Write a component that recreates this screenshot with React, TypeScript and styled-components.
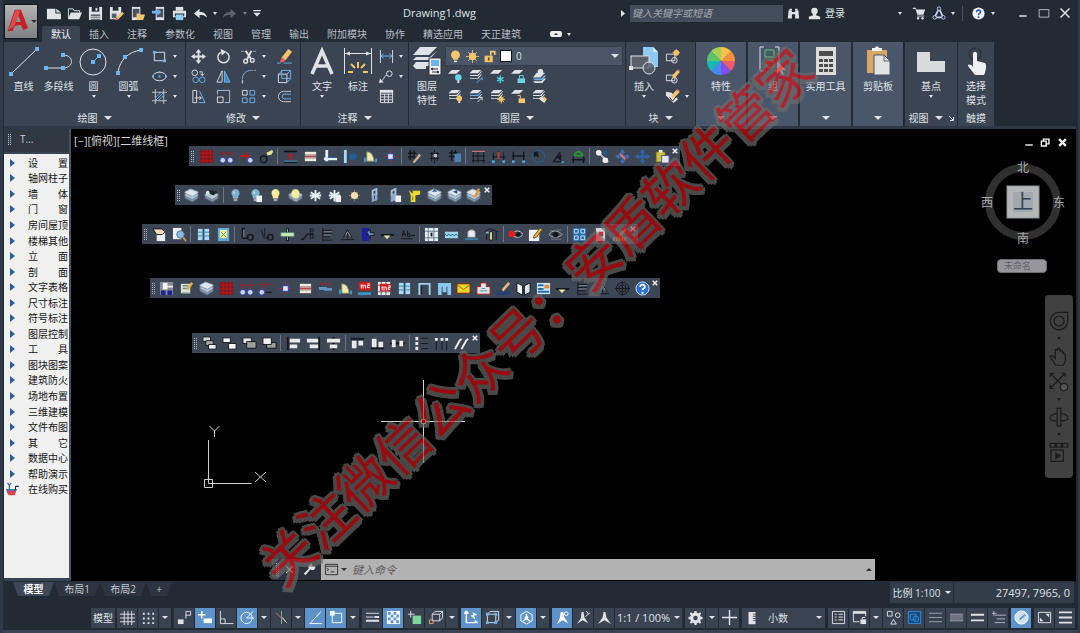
import React from "react";
import styled, { createGlobalStyle, css } from "styled-components";

/* ---------- palette ---------- */
const ink = "#dfe2e6";
const blue = "#6cb4ee";
const amber = "#f4c66c";
const dark = "#14181e";
const red = "#c2181c";

/* ---------- icon data ---------- */
type Shape = { d: string; stroke?: string; fill?: string; w?: number };
const S = (d: string, stroke = ink, w = 1): Shape => ({ d, stroke, w });
const F = (d: string, fill = ink, stroke?: string): Shape => ({ d, fill, stroke, w: 1 });
const C = (x: number, y: number, r: number) =>
  `M${x - r} ${y}a${r} ${r} 0 1 0 ${r * 2} 0a${r} ${r} 0 1 0 ${-r * 2} 0z`;
const R = (x: number, y: number, w: number, h: number) => `M${x} ${y}h${w}v${h}h${-w}z`;

const stack = (c1: string, c2: string): Shape[] => [
  F("M4 1h9l-3.500 3.500h-9z", c1),
  F("M1.500 6h1l-.5.5h7l4-4h1l-4 5h-9z", c2),
  F("M1.500 9h1l-.5.5h7l4-4h1l-4 5h-9z", c1),
];
const sheets: Shape[] = [
  F("M1 9l7-3 7 3v2l-6 4-8-4z", "#8397aa", "#59697a"),
  F("M1 6.500l6-3 8 3v2l-6 4-8-4z", "#b3c6d5", "#6b7f92"),
  F("M1 4l6-3 8 3v1.500l-6 3.500-8-3.500z", "#dce7ef", "#8298ab"),
];
const bulb = (c: string): Shape[] => [
  F("M8 1a4.500 4.500 0 0 1 3 7.700v2.300h-6v-2.300a4.500 4.500 0 0 1 3-7.700z", c),
  F(R(6, 11, 4, 3), "#a2a7ad"),
  S("M6.500 3.500v3", "#f4f8fa"),
];
const flake = (c: string): Shape[] => [S("M8 2v12M3 4.500l10 7M13 4.500l-10 7M2 8h12", c, 2)];
const page: Shape[] = [F("M9 8h6v7h-6z", "#eef0f2")];
const winBlue: Shape[] = [
  F(R(2, 2, 5, 12), "#a9dbf2"),
  F(R(9, 2, 5, 12), "#a9dbf2"),
  S("M2 5.500h5M2 9.500h5M9 5.500h5M9 9.500h5", "#3c86b8"),
];
const door: Shape[] = [
  F("M4 3c5 0 7 4 8 10H4z", "#f1e7b0", "#7f8a5c"),
  F("M1 9h2v5h-2zM13 10h2v4h-2z", "#3e9bd8"),
];
const rulerLeg: Shape[] = [S("M3 1v14M3 3.500h10M3 7h10M3 10.500h8M3 14h10", dark), S("M4 5h9M4 8.500h8", "#7b818a")];
const triMark: Shape[] = [S("M1 13.500h14M3 12l5-9 5 9M8 5v8", dark), S("M6 9l2-4 3 5", "#9da3aa")];
const elev: Shape[] = [S("M1 8.500h14", dark, 2), F("M4 9h7l-3.500 4z", "#f0e2b0")];
const redGrid: Shape[] = [F(R(1, 1, 14, 14), "#7a1a20"), S("M1 4.500h14M1 8.500h14M1 12.500h14M4.500 1v14M8.500 1v14M12.500 1v14", "#bd161c")];
const axes: Shape[] = [S("M3.500 3v6M12.500 3v6M1 4.500h14", "#a41a20"), F(C(4, 12, 3), "#c8d4f8", "#2f3cae"), F(C(12, 12, 3), "#c8d4f8", "#2f3cae")];
const axis1: Shape[] = [S("M1 7.500h10M8.500 4v6", red, 2), F(C(12, 12, 3), "#c8d4f8", "#2f3cae")];
const column: Shape[] = [S("M8 1v14M1 8h14", "#a0323c"), F(R(5, 5, 6, 6), "#dbe4fa", "#2f3cae")];
const wallBar: Shape[] = [F(R(2, 3, 12, 3), "#f0ead8"), F(R(2, 6, 12, 4), "#c39a98"), F(R(2, 10, 12, 3), "#f0ead8"), S("M2 8h12", "#b04040")];

const icons: Record<string, Shape[]> = {
  /* quick access */
  new: [F("M1 3h9v5h6v6h-15z"), F("M11 3l5 4h-5z")],
  open: [S("M1.500 13v-10h5l1 2h6v2", ink, 1), F("M4 7h12l-3 7h-12z")],
  save: [F("M1 1h14v14h-14z"), F(R(4, 1, 8, 5), "#222a34"), F(R(8, 2, 2, 3)), F(R(3, 9, 10, 6), "#59616c"), S("M3 11.500h10M3 13.500h10")],
  saveAs: [F("M1 1h12v6l-5 7h-7z"), F(R(4, 1, 6, 4), "#222a34"), F(R(3, 8, 5, 5), "#59616c"), F("M8 12l6-6 2 2-6 6-3 1z", amber), F("M7 15l1-3 2 2z", "#e2574c")],
  openWeb: [F("M2 1h9v14h-9z"), F(R(3, 3, 7, 9), "#4a525e"), F("M7 8h3l1 1h5l-2 6h-7z", amber)],
  saveWeb: [F("M5 1h9v14h-9z"), F(R(6, 3, 7, 9), "#4a525e"), F("M1 5h6v-2l4 3.500-4 3.500v-2h-6z", blue)],
  print: [F(R(4, 1, 8, 4)), F("M1 5h14v7h-14z"), F(R(3, 8, 10, 3), "#222a34"), F(R(4, 9, 8, 6), "#8fd0f2")],
  undo: [F("M1 8l6-5v3.500c5 0 7 2 8 6-2-2.500-4-3-8-3v3.500z")],
  redo: [F("M15 8l-6-5v3.500c-5 0-7 2-8 6 2-2.500 4-3 8-3v3.500z", "#59616c")],
  custom: [F("M3 4h10v1.500h-10zM3 7.500h10l-5 5z")],
  binoc: [F("M2 4h4v2h4v-2h4l1 10h-5v-5h-4v5h-5z"), F("M3 2h3v2h-3zM10 2h3v2h-3z")],
  user: [F(C(8, 5, 4)), F("M6 8h4v2l5 2v3h-14v-3l5-2z")],
  cart: [F("M1 2h3l1 2h10l-2 6h-7l-2-6.500h-3z"), S("M6 11.500h8", ink), F(C(7, 14, 1.4)), F(C(12, 14, 1.4))],
  share: [S("M8 3l-5 10h10z", "#c9d0f0", 2), F(C(8, 3, 2), "#222a34", "#c9d0ff"), F(C(3, 13, 2), "#222a34", "#c9d0ff"), F(C(13, 13, 2), "#222a34", "#c9d0ff")],
  help: [F(C(8, 8, 7.5), "#f2f4f8"), S("M5.500 6.500c0-4 5.500-3 5 0-.3 1.500-2.500 1.500-2.500 3.500M8 11.500v2", "#2f54c0", 2)],
  min: [S("M3 12h10", ink, 2)],
  max: [S("M1.500 3.500h13v10h-13z", ink, 1)],
  close: [S("M2 2l12 12M14 2l-12 12", ink, 2)],
  closeBold: [S("M2 2l12 12M14 2l-12 12", "#f0f1f3", 4)],

  /* small ribbon icons */
  rect: [S("M2.500 3.500h11v9h-11z"), F("M1 2h3v3h-3zM12 11h3v3h-3z", blue)],
  ellipse: [S("M1 8a7 4.500 0 1 0 14 0a7 4.500 0 1 0-14 0z"), F("M7 7h2v2h-2zM0 7h2v2h-2zM14 7h2v2h-2zM7 2.500h2v2h-2z", blue)],
  hatch: [S("M3.500 0v16M12.500 0v16M0 3.500h16M0 12.500h16", "#c5c9cf"), S("M4 9l5-5M4 12l8-8M7 12l5-5", blue, 1)],
  move: [F("M8 0l3 4h-2v3h3v-2l4 3-4 3v-2h-3v3h2l-3 4-3-4h2v-3h-3v2l-4-3 4-3v2h3v-3h-2z")],
  rotate: [S("M11 3.500a6 6 0 1 1-6 0", ink, 1.5), F("M5 0l6 3-5 4z")],
  trim: [S("M0 2.500h3M4 2.500h2M10 2.500h2M13 2.500h3", "#a3a8af"), S("M5 2l6 9M11 2l-5 10", ink, 2), S(C(5, 13, 2), ink, 1.5), S(C(12, 12, 2), ink, 1.5)],
  erase: [F("M12 0l4 3-7 9-4-3z", amber), F("M5 8.500l4 3.500-2 2h-4z", "#e0655a"), S("M0 15h4M7 15h9", blue)],
  copy: [S(C(4, 4, 3)), S(C(5, 11.5, 3), blue), S(C(12, 11.5, 3), blue), S("M9 3h3v4M10 5l2 2 2-2")],
  mirror: [S("M6.500 2v12h-5.500z"), F("M9 2l6 12h-6z", "#4687bd", blue)],
  fillet: [S("M1.500 15.500v-4"), S("M1.500 11c0-6 4-9.500 9-9.500", blue), S("M11 1.500h2M14 1.500h2", "#a3a8af")],
  box3: [S("M1.500 5.500h9v9h-9z"), S("M1.500 5.500l4-4h9v9l-4 4M10.500 5.500l4-4", blue), S("M5 1v9h9", blue)],
  stretch: [S("M2 1.500h4v13h-4z"), S("M9 2l6 12.500h-7", blue), S("M4 9.500h7M9 7.500l2 2-2 2")],
  scale: [S("M1.500 8.500h6v6h-6z"), S("M1.500 6v-4.500h13v13h-5", "#9fc8ea")],
  array: [S("M1.500 1.500h5v5h-5z"), S("M9.500 1.500h5v5h-5zM1.500 9.500h5v5h-5zM9.500 9.500h5v5h-5z", blue)],
  offset: [S("M15 2.500h-8a5.500 5.500 0 0 0 0 11h8", "#c5c9cf", 1), S("M15 5.500h-7a2.500 2.500 0 0 0 0 5h7", blue)],
  dimlin: [S("M1.500 1v14M14.500 1v14"), S("M2 7.500h12M5 5l-3 2.500 3 2.500M11 5l3 2.500-3 2.500", blue)],
  leader: [S(C(11, 5, 3)), S("M8.500 6.500c-3 0-2 4-7 7"), F("M0 15l1-5 4 4z")],
  table: [S("M1.500 1.500h13v13h-13zM1.500 5.500h13M1.500 8.500h13M1.500 11.500h13M6 5v10M10 5v10"), F(R(1, 1, 14, 3))],
  l1: [F("M4 1h9l-4 4h-9z"), F(C(11, 9, 3.5), "#6cd5e0"), F(R(10, 12, 2, 3))],
  l2: [...stack(ink, ink), S("M8 15l6-6M14 9v3", blue, 1)],
  l3: [F("M4 1h9l-4 4h-9z"), S("M11 7v8M7.500 9l7 4M14.500 9l-7 4", "#4fd0dc", 1.5)],
  l4: [F("M4 1h9l-4 4h-9z"), F(R(7, 10, 8, 5), "#6cd5e0"), S("M9 10v-3h4v3", "#6cd5e0")],
  l5: [F("M3 15h8l4-5h-2l-3 3h-9z"), F("M3 12h8l4-5h-2l-3 3h-9z", blue), F("M1 9h8l5-5h-9z"), F(C(9, 3, 3))],
  l6: [...stack(ink, ink), F(C(12, 10, 3), amber), F(R(11, 13, 2, 2))],
  l7: [...stack(ink, blue), S("M9 14l5-5M11 9h3v3")],
  l8: [...stack(ink, ink), F(C(12, 11, 2.5), amber), S("M12 6.500v9M7.500 11h9M9 8l6 6M15 8l-6 6", amber)],
  l9: [F("M4 1h9l-4 4h-9z"), F(R(8, 10, 7, 5), amber), S("M10 10v-3h-3", amber)],
  l10: [...stack(ink, ink), F("M7 10l3-2 5 4-2 3z", "#ece8dc"), F("M11 9l2-1 3 3-2 2z", amber)],
  b1: [S("M1.500 5.500h9v7h-9z"), S(C(10, 12, 3)), F(C(12, 4, 3), amber), S("M12 0v8M8 4h8", amber)],
  b2: [S("M1.500 6.500h9v6h-9z"), S(C(10, 12, 3)), F("M8 7l5-6 3 2-5 6-3 1z", amber), F("M13 1l1-1 2 2-1 1z", "#e0655a")],
  b3: [F("M1 3l6 1 7 7-5 4-8-8z"), F("M7 7l5-6 4 2-6 6-3 1z", amber), F("M12 1l1-1 3 2-1 1z", "#e0655a"), S("M5 9l3 4 4-5", dark)],
  lockY: [F(R(2, 7, 10, 8), amber), S("M9.500 7v-5h5v4", amber, 2), F(R(6, 9, 2, 4), "#5a4a28")],
  bulbY: [F(C(8, 6, 5.5), amber), F(R(5, 10, 6, 2), amber), F(R(6, 13, 4, 2))],
  sunY: [F(C(8, 8, 4.5), amber), S("M8 0v16M0 8h16M2.500 2.500l11 11M13.500 2.500l-11 11", amber, 1)],

  /* floating toolbars */
  redGrid, axes, axis1, column, wallBar, door, winBlue, rulerLeg, triMark, elev, sheets,
  axisKey: [S(C(5, 11, 3.5), dark, 1.5), S("M8 9l6-7", dark), F("M8 4l6-3 1 2-2 3-4 1z", "#e9e39a")],
  ibeam: [S("M1 2.500h14M1 14h14", "#101318", 2), S("M1 13h14", "#4aa0d8"), F("M8 4l3 4h-2v4h-2v-4h-2z", red)],
  corner: [S("M4 1v12M1 10.500h14", "#dff0fa", 3), S("M5 9h10", "#27619a")],
  arrowIn: [F(R(1, 1, 3, 14), "#a8daf4"), F("M7 5h4v-2l4 5-4 5v-2h-4z", "#1e5f9c")],
  hatchPen: [S("M1 4.500h9M1 8.500h7M3.500 1v11M7.500 1v9", dark, 1.5), F("M6 14l7-9 2 2-7 8z", "#d9b094")],
  cross1: [S("M3 5h10M3 10h10M8 1v14M5 3v10M11 3v10", dark), F(C(9, 7, 2), "#b8bec6")],
  cross2: [S("M2 4h9M2 8h9M5 1v12M9 1v8", dark, 1.5), F(R(8, 5, 7, 9), "#4f7db4")],
  grid3: [S("M2.500 3v12M7.500 3v12M13.500 3v12M1 7.500h14M1 12.500h14", dark), S("M1 2.500h14", "#e88080")],
  dim2: [S("M2.500 4v9M13.500 4v9M1 8.500h14M8 2v10", dark), F(R(1, 12, 3, 3), "#4aa0d8"), F(R(12, 12, 3, 3), "#4aa0d8"), F("M7 3h2v8h-2z", "#c04028")],
  dim3: [S("M2.500 3v10M13.500 3v10M1 7.500h14", dark, 1.5), F(R(1, 12, 3, 3), "#4aa0d8"), F(R(12, 12, 3, 3), "#4aa0d8")],
  radius: [S(C(8, 8, 6.5), "#1f5fa0"), S("M8 8l-4-4M4 8v-4h4", dark, 2)],
  angle: [S("M2 13.500h12M3 13l7-10", dark, 1.5), F("M6 9l5-4v8z", dark), F(R(11, 13, 3, 2), "#4aa0d8")],
  dimGreen: [S("M2.500 8v7M13.500 8v7M1 11.500h14", dark, 1.5), S("M4 7a4 4 0 1 1 8 0z", "#259a2c", 2)],
  diag: [S("M2 2l12 12", "#b9c0c8", 2), F(C(4, 4, 3), "#f2f2f2"), F(C(11, 12, 3), "#f2f2f2"), F(R(9, 2, 4, 4), "#245a94")],
  moveRed: [F("M8 0l3 4h-2v3h3v-2l4 3-4 3v-2h-3v3h2l-3 4-3-4h2v-3h-3v2l-4-3 4-3v2h3v-3h-2z", "#3f6fb2"), S("M5 5l6 6", "#e07070", 2)],
  moveBlue: [F("M8 0l3 4h-2v3h3v-2l4 3-4 3v-2h-3v3h2l-3 4-3-4h2v-3h-3v2l-4-3 4-3v2h3v-3h-2z", "#2f66b0")],
  paste: [F(R(1, 3, 10, 11), "#c9c23a", "#55501a"), F(R(4, 1, 4, 3), "#e8e8d0"), F(R(7, 7, 8, 8), "#e4e4f4", "#5a4a9a")],
  sheetDark: [...sheets.slice(0, 2), F("M2 4l4-2 9 2-5 4z", "#20262e"), F(C(4, 5, 2), "#dfe6ec")],
  bulbB: bulb("#7fb2cf"),
  bulbBP: [...bulb("#7fb2cf"), ...page],
  bulbW: bulb("#f5ec96"),
  bulbS: [...sheets.slice(0, 2), ...bulb("#f5ec96")],
  flake: flake("#e4eef4"),
  flakeP: [...flake("#e4eef4"), ...page],
  sun: [S("M8 2v12M2 8h12M4 4l8 8M12 4l-8 8", "#a87a58"), F(C(8, 8, 3.8), "#fbdfae")],
  lockB: [F("M5 7l6-2v8l-6 2z", "#8fa9c8"), S("M6 8v-5l4-2v6", "#a9bdd6", 2), S("M8 8v4", "#30405a")],
  lockBP: [F("M4 7l6-2v8l-6 2z", "#8fa9c8"), S("M5 8v-5l4-2v6", "#a9bdd6", 2), ...page],
  lockYe: [F("M2 2l4 4v-3h8v4l-5 1v7h-5v-7z", "#e4dc30"), S("M6 9v4", "#7c7718")],
  sheetCur: [...sheets, F("M8 1l3 3h-6z", "#40618c")],
  sheetBlue: [...sheets, F("M6 4l5-2v4z", "#2b5080")],
  sheetPen: [...sheets, F("M8 9l5-9 2 1-4 9z", "#e59a38")],
  handDoc: [F(R(5, 4, 9, 11), "#eceff2"), F("M1 2h9l4 3-3 3h-6z", "#f3dcc0", dark)],
  preview: [F(R(1, 1, 9, 12), "#edf1f4"), F(C(9, 8, 4), "#8ab8de", "#54789c"), S("M12 11l3 4", "#c98a58", 2)],
  winGreen: [F(R(2, 1, 12, 14), "#5fa8d0"), F(R(4, 3, 8, 9), "#e6efb0"), S("M5 5l6 6M11 5l-6 6", "#8a9a3c")],
  lev1: [S("M2.500 1v11h6M2 3l3-2", dark, 1.5), S(C(11, 11, 3), dark, 1.5), S("M4 3v8", "#7d858e")],
  lev2: [S("M1 2.500l3 9h6M5 1v9", dark), S(C(11, 11, 3), dark, 1.5)],
  beam: [S("M8 1v14", dark, 3), S("M8 2v12", "#76c8a0"), F(R(1, 6, 14, 4), "#d3e8bc", "#4f8f78")],
  path8: [S("M1 13.500c6 0 4-6 8-6h5", dark, 1.5), S("M11 2h3v3h-3zM11 8h3v4h-3z", dark)],
  insBlue: [F(R(2, 1, 8, 14), "#1f1f9a"), F("M7 5l4-2v3h4v3h-4v3z", "#6a8fc4", dark)],
  ab: [S("M1 12.500h12M2 10l2-6 2 6M3 8h3M8 4v6h2.500v-3h-2M12 9h4", dark)],
  gridLt: [F(R(1, 1, 14, 14), "#e9edf0"), S("M4.500 1v14M10.500 1v14M1 4.500h14M1 11.500h14", "#56789a"), F(R(7, 6, 2, 4), dark)],
  wave: [F(R(1, 5, 14, 7), "#9bd4e6"), S("M1 7.500l2 2 2-2 2 2 2-2 2 2 2-2 2 2", "#1d5674")],
  dome: [F("M4 11v-5c0-4 8-4 8 0v5z", "#e8eaec", "#7a828c"), S("M1 13h14", "#3a7aa4", 2)],
  house: [S("M1 5l5-3 9 3M3 5v9M13 5v9", dark), F(R(6, 5, 3, 9), "#e6e490", dark), F(R(2, 5, 3, 2), "#79b4c8")],
  eyeRed: [S("M4 8c3-5 9-5 12 0-3 4-9 4-12 0z", "#c0c6cc"), F(C(11, 8, 2.5), dark), F(C(4, 7.5, 3.5), "#ee1a1a")],
  editDoc: [F(R(1, 3, 11, 12), "#f0f2f4"), F("M6 10l7-9 2 2-6 8-3 1z", "#e7b43c", "#6a4c18")],
  eye: [S("M1 8c3-5 10-5 14 0-4 4-10 4-14 0z", "#a9b0b8"), F(C(8, 8, 3), dark), S("M2 4l12-1M3 13l11 0", "#6d7580")],
  gridBlue: [F(R(1, 1, 14, 14), "#2b6ba6"), S("M2.500 2.500h4v4h-4zM9.500 2.500h4v4h-4zM2.500 9.500h4v4h-4zM9.500 9.500h4v4h-4z", "#c3e4f5")],
  film: [F(R(2, 1, 12, 14), "#d9d4d8"), F(R(6, 5, 5, 5), "#c03040"), S("M2.500 1v14M13.500 1v14", "#333")],
  waveY: [S("M1 11v4M4 10v5M7 11v4M10 10v5M13 11v4", "#e0a53c", 2), F("M6 8l7-7 1 3-6 6z", "#e08a48")],
  colGrey: [F(R(1, 1, 14, 14), "#858c95"), F(R(4, 2, 5, 7), "#f3f3f3"), F("M2 10h5v5h-5zM9 10h5v5h-5z", "#1f228c"), S("M8 6h7", "#e8e8e8", 2)],
  sketch: [F(R(2, 3, 10, 10), "#dfe3da"), S("M4 5h6M4 8h6M3 13h9", "#6f8a80", 1.5), F("M8 8l5-7 2 2-5 7z", "#e2b24c")],
  axisL: [S("M1 3.500h14M4.500 1v8", "#a41a20"), F(C(4, 12, 3), "#c8d4f8", "#2f3cae"), S("M8 12h7", dark)],
  pipe: [S("M1 8h7v1h7", "#5d93bd", 3), F("M4 5l-2-3h4zM11 5l-2-3h4z", red)],
  m2: [F(R(2, 1, 13, 9), "#d41c20"), S("M4.500 8v-4M4 4.500h5M6.500 5v3M9 5v3M11 3h2v2h-2v2h2.500", "#fff"), F(R(1, 12, 14, 3), "#3f93c6")],
  m2p: [F(R(1, 1, 13, 14), "#eef1f3"), S("M1 4.500h13M1 11.500h13M4.500 1v14M9.500 1v14", "#555d68"), F(R(3, 3, 12, 8), "#d41c20"), S("M5.500 10v-4M5 6.500h5M7.500 7v3M10 7v3M12 5h2v2h-2v2h2", "#fff")],
  gate: [S("M2.500 15v-12h11v12", "#9fd0ea", 2), S("M5 5v9", dark)],
  gateF: [F("M1 2h14v13h-4v-9h-1v6h-4v-6h-1v9h-4z", "#8cc8ee")],
  envY: [F(R(1, 3, 14, 10), "#ecd62c", "#8f1f18"), S("M1 4l7 5 7-5", "#8b6a10")],
  stampR: [F("M5 2h6v4h4v8h-14v-8h4z", "#d7e8ea", red), S("M4 10.500h8M6 8h4", "#5a8a94")],
  penBlue: [S("M1 11h5M9 12h6M1 14h12", "#1c3f7c", 2), F("M6 9l7-8 2 2-7 8z", "#e2b88a")],
  book: [F("M1 2l6 3v10l-6-3z", "#f5f5f5", dark), F("M15 2l-6 3v10l6-3z", "#dfe4e8", dark)],
  layout: [F(R(1, 2, 14, 12), "#cfe6f5"), F(R(9, 4, 5, 4), "#e28a3c"), S("M2 4.500h6M2 8.500h6M2 11.500h12", "#2b6ba6", 2)],
  target: [S(C(8, 8, 6.5), dark), S("M8 0v16M0 8h16", dark, 1), S(C(8, 8, 4), dark)],
  helpB: [F(C(8, 8, 7), "#2a6fd6", "#cfe2fa"), S("M5.500 6.500c0-4 5.500-3 5 0-.3 1.500-2.500 1.500-2.500 3M8 11.500v2", "#fff", 2)],
  ord1: [F(R(1, 1, 8, 5), "#d8dadc", dark), F(R(4, 5, 8, 5), "#aab0a8", dark), F(R(7, 9, 8, 5), "#eef0f2", dark)],
  ord2: [F(R(1, 2, 8, 5), "#f4f5f6", dark), F(R(7, 8, 8, 6), "#f4f5f6", dark)],
  ord3: [F(R(1, 2, 9, 6), "#e4e6e8", dark), F(R(5, 6, 10, 7), "#9ba29c", dark)],
  ord4: [F(R(5, 7, 10, 6), "#9ba29c", dark), F(R(1, 2, 9, 7), "#f0f2f4", dark)],
  alL: [S("M2 1v14", dark, 2), F("M4 3h11v4h-11zM4 9h8v4h-8z", "#e8eaec")],
  alR: [S("M14 1v14", dark, 2), F("M1 3h12v4h-12zM4 9h9v4h-9z", "#e8eaec")],
  alC: [S("M8 1v14", dark, 2), F("M1 3h14v4h-14zM4 9h8v4h-8z", "#e8eaec")],
  alT: [S("M1 3h14", dark, 2), F("M2 5h5v8h-5zM9 5h5v5h-5z", "#e8eaec")],
  alB: [S("M1 13h14", dark, 2), F("M2 3h5v9h-5zM9 6h5v6h-5z", "#e8eaec")],
  alM: [S("M0 8h16", dark, 2), F("M2 4h4v8h-4zM10 5h4v6h-4z", "#e8eaec")],
  listW: [S("M3 1v14", "#e8eaec", 3), S("M1 5.500h4M1 10.500h4", "#3d4655", 2), S("M7 2.500h8M7 8h8M7 13.500h8", dark, 1)],
  cols: [F("M1 2h3v3h-3zM7 2h3v3h-3zM12 2h3v3h-3z", "#e8eaec"), S("M2.500 6v9M8.500 6v9M13.500 6v9", dark)],
  slashes: [S("M1 14l5-9 2-2M8 14l5-9 2-2", "#f0f1f3", 2)],

  /* status bar */
  gridS: [S("M0 4.500h16M0 8.500h16M0 12.500h16M4.500 1v15M8.500 1v15M12.500 1v15", ink, 1)],
  dots: [F([3, 8, 13].map((y) => [2, 7, 12].map((x) => R(x, y, 2, 2)).join("")).join(""))],
  infer: [F(R(1, 10, 6, 5)), S("M9.500 9v-7.500h5v4h-5")],
  dyn: [S("M4 1v8M0 5h8", "#fff", 1.5), F(R(6, 9, 9, 5), "#fff")],
  ortho: [S("M1.500 1v13.500h14M1.500 9.500h5v5")],
  polar: [S(C(7, 8.5, 6), "#fff"), S("M7 8.500l7-7M7 8.500h8", "#fff")],
  iso: [S("M2 3l12 11", "#d46a78"), S("M8 1v14", "#79b885"), S("M9 8l4 5", ink)],
  track: [S("M15 14.500h-13l12-13", "#fff")],
  osnap: [S("M3.500 3.500h10v10h-10z", "#fff"), F("M1 1h5v5h-5z", "#fff")],
  lw: [S("M1 3.500h14M1 7.500h8", ink, 1), S("M10 7.500h5M1 11.500h14", ink, 2)],
  transp: [F(R(1, 1, 14, 14), "#fff"), F([2, 8].map((y) => [2, 8].map((x) => R(x, y, 3, 3) + R(x + 3, y + 3, 3, 3)).join("")).join(""), "#5d93c8")],
  cycle: [F(R(6, 6, 9, 9), "#7fd69a"), S("M4 1v7M1 4.500h7")],
  cube: [S("M4.500 4.500h8v7h-8zM4.500 4.500l3-3h8v7l-3 3M12.500 4.500l3-3"), S("M1.500 10.500h4v4h-4z", "#e6a070")],
  ucsA: [S("M2.500 1v12.500h12M2.500 1l-2 3M2.500 1l2 3M14.500 13.500l-3-2", "#fff", 1.5), F("M9 2l5 3-3 1 1 4-5-4 3-1z", "#fff")],
  filter: [S("M2.500 4.500h9v9h-9zM2.500 4.500l3-3h9v9l-3 3"), F("M1 3h3v3h-3zM10 3h3v3h-3zM1 12h3v3h-3zM10 12h3v3h-3z", blue)],
  gizmo: [S("M8 1.500l6 3.500v6.500l-6 3.500-6-3.500v-6.500z", "#fff"), S("M8 4v5l-4 3M8 9l4 3", "#fff", 1.5), F(C(8, 8, 2), "#fff")],
  ann1: [F("M6 2h3l1 6 4 6-6-3-6 4 3-6z", "#fff"), S(C(12, 4, 2), "#fff")],
  ann2: [F("M6 2h2l1 6 4 6-6-3-6 4 4-6z"), S("M11 1l2 3M15 3l-5 4")],
  ann3: [F("M7 2h2l1 6 5 7-7-4-7 4 5-7z")],
  gear: [F("M7 1h2l.5 2 1.500.6 1.800-1.200 1.300 1.300-1.200 1.800.6 1.500 2 .5v2l-2 .5-.6 1.500 1.200 1.800-1.300 1.300-1.800-1.200-1.500.6-.5 2h-2l-.5-2-1.500-.6-1.800 1.200-1.300-1.300 1.200-1.800-.6-1.500-2-.5v-2l2-.5.6-1.500-1.200-1.800 1.300-1.300 1.800 1.200 1.500-.6z"), F(C(8, 8.5, 2.4), "#3a4352")],
  plus: [S("M8 0v16M0 8h16", ink, 1.5)],
  ruler: [F("M4 1h8v2h-3v1h3v1.500h-3v1h3v1.500h-3v1h3v1.500h-3v1h3v3.500h-8z")],
  qp: [S("M1.500 1.500h13v13h-13z"), S("M4 4.500h2M8 4.500h5M4 7.500h2M8 7.500h5M4 10.500h2M8 10.500h5")],
  lockUi: [S("M8 12.500h-6.500v-11h13v5"), S("M1 3h14", ink, 2), F(R(9, 10, 6, 5)), S("M11 10v-2h3")],
  shapes: [S("M1.500 1.500h5v5h-5zM5 15l3-5 3 5z"), S(C(12.5, 5.5, 2.5))],
  isoBlue: [F(R(1, 1, 14, 14), "#1c4a78"), S("M1.500 1.500h13v13h-13zM3.500 4.500h6v6h-6z", "#2f8be0"), S(C(9.5, 9.5, 3), "#2f8be0")],
  ham1: [S("M1 3.500h14M1 8h14M1 12.500h14", "#9aa0a9")],
  ham2: [F(R(1, 4, 14, 8), "#6d7480"), S("M1 4.500h14M1 11.500h14", "#8d939d")],
  ham3: [S("M1 5h14M1 11h14", ink, 2)],
  ham4: [S("M4 5.500h12M6 9.500h9M4 13.500h11M3 1v5M1 3.500h5", "#b4b9c1")],
  perf: [F(C(8, 8, 7), "#cfe0f0"), S("M6 10l6-5", "#5d93c8", 2), S(C(8, 8, 7), "#fff")],
  full: [S("M1.500 2.500h13v11h-13z"), F("M9 4h4v4zM3 8v4h4z")],
  menu: [S("M1 2.500h14M1 8h14M1 13.500h14", ink, 2)],
  restore: [S("M2 6h7v7h-7zM5 5v-2h8v7h-3", "#fff", 2)],
  wrench: [F("M10 1c3-1 0 2 2 3s4-1 3 2c-1 3-4 3-6 2l-6 7-2-2 6-6c-1-3 0-5 3-6z")],
  prompt: [S("M1.500 2.500h13v11h-13zM1.500 4.500h13M3 6.500l2 1.500-2 1.500M7 10.500h4", "#343434")],
  buy: [S("M3 1l2 3 2-3M5 4v4M12 5h3", "#3a6ea8", 1.5), F("M1 8h13l-3 5h-8z", "#4378b4"), F("M2 10h11l-2 5h-7z", "#d8444c"), S("M12 9v-4h4", dark)],

  /* viewport navigation */
  wheel: [S("M8 1h7v7a7 7 0 1 1-7-7z", "#1c1c1c"), S(C(8, 8, 4), "#1c1c1c")],
  hand: [S("M5 15c-1-3-4-5-4-7 2-1 3 1 4 2v-7c1-1 2 0 2 1v-2c1-1 2 0 2 1v1c1-1 2 0 2 1v1c1-1 2 0 2 1v5c0 2-2 3-2 4z", "#1c1c1c")],
  zoomX: [S("M1 1l12 12M13 1l-12 12M1 4v-3h3M10 1h3v3M1 10v3h3", "#1c1c1c"), F(C(12, 12, 3), "#555", "#1c1c1c")],
  orbit: [S("M6.500 1h3v14h-3zM6 5c-7 2-7 6 0 6M10 5c7 2 7 6 0 6", "#1c1c1c")],
  movie: [S("M1 1h4v3h-4zM6 1h4v3h-4zM11 1h4v3h-4zM1.500 6.500h10v9h-10z", "#1c1c1c"), F("M5 8l5 3-5 3z", "#1c1c1c")],
};

const Icon = ({ name, size = 16 }: { name: string; size?: number }) => (
  <svg width={size} height={size} viewBox="0 0 16 16" aria-hidden="true">
    {(icons[name] || []).map((p, i) => (
      <path key={i} d={p.d} fill={p.fill || "none"} stroke={p.stroke || "none"} strokeWidth={p.w} />
    ))}
  </svg>
);

/* ---------- base ---------- */
const GlobalStyle = createGlobalStyle`
  * { box-sizing: border-box; }
  body { margin: 0; background: #222a34; }
  body, button, input, select {
    font-family: "Open Sans", "Noto Sans CJK SC", sans-serif;
    font-size: 10px;
    line-height: 14px;
    color: #dfe2e6;
  }
  button, input { border: 0; padding: 0; margin: 0; background: none; }
  svg { display: block; flex: none; }
`;

const Shell = styled.div`
  position: relative;
  display: flex;
  flex-direction: column;
  min-height: 100vh;
  padding: 0 4px 4px;
  overflow: hidden;
  background: #222a34;
  box-shadow: inset 3px 0 #303947, inset -2px 0 #303947, inset 0 -3px #3a4353;
`;

const Caret = styled.i<{ $size?: number; $up?: boolean; $color?: string }>`
  flex: none;
  width: 0;
  height: 0;
  border: solid transparent;
  border-width: 0 ${(p) => p.$size || 2}px;
  ${(p) => (p.$up ? "border-bottom" : "border-top")}: ${(p) => p.$size || 3}px solid ${(p) => p.$color || "#dfe2e6"};
`;

/* ---------- header ---------- */
const Header = styled.header`
  display: flex;
  height: 42px;
`;
const AppButton = styled.button`
  display: flex;
  align-items: center;
  width: 34px;
  height: 35px;
  margin-top: 4px;
  border: 1px solid #14181e;
  background: linear-gradient(#b4b4b4, #7d7f82);
`;
const HeaderMain = styled.div`
  flex: 1;
  min-width: 0;
`;
const TitleBar = styled.div`
  display: flex;
  align-items: center;
  justify-content: space-between;
  height: 26px;
`;
const ToolStrip = styled.div`
  display: flex;
  align-items: center;
  padding-left: 5px;
`;
const IconButton = styled.button<{ $w?: number }>`
  display: flex;
  align-items: center;
  justify-content: center;
  width: ${(p) => p.$w || 21}px;
  height: 20px;
`;
const DocTitle = styled.h1`
  flex: none;
  margin: 0;
  font-size: 11px;
  font-weight: 400;
  line-height: 20px;
`;
const TitleTools = styled.div`
  display: flex;
  align-items: center;
`;
const TitleHalf = styled.div<{ $end?: boolean }>`
  display: flex;
  flex: ${(p) => (p.$end ? "0 0 600px" : "1")};
  justify-content: ${(p) => (p.$end ? "flex-end" : "flex-start")};
`;
const SearchBox = styled.input`
  width: 153px;
  height: 17px;
  margin-left: 5px;
  padding-left: 2px;
  background: #434c5b;
  font-style: italic;
  &::placeholder { color: #a2a8b1; opacity: 1; }
`;
const SignIn = styled.button`
  display: flex;
  align-items: center;
  width: 88px;
`;
const WindowButtons = styled.div`
  display: flex;
  margin-left: 14px;
`;
const Divider = styled.span`
  width: 1px;
  height: 15px;
  margin: 0 5px;
  background: #4b535f;
`;
const Tabs = styled.nav`
  display: flex;
  padding-left: 4px;
`;
const Tab = styled.button<{ $active?: boolean }>`
  height: 16px;
  padding: 0 9px;
  border-radius: 2px 2px 0 0;
  background: ${(p) => (p.$active ? "#3b4453" : "none")};
  color: ${(p) => (p.$active ? "#f4f5f6" : "#b9bec6")};
`;
const TabExtra = styled.button`
  display: flex;
  align-items: center;
  gap: 5px;
  padding-left: 20px;
`;
const Pill = styled.span`
  display: flex;
  align-items: center;
  justify-content: center;
  width: 12px;
  height: 6px;
  border-radius: 2px;
  background: #eceef0;
`;

/* ---------- ribbon ---------- */
const Ribbon = styled.div`
  display: flex;
  height: 87px;
  border-bottom: 3px solid #2f3846;
`;
const Panel = styled.section<{ $w: number; $tall?: boolean }>`
  display: flex;
  flex-direction: column;
  width: ${(p) => p.$w}px;
  height: 84px;
  margin-right: ${(p) => (p.$tall ? 2 : 1)}px;
  background: ${(p) => (p.$tall ? "#4a566a" : "#3b4453")};
  flex: none;
`;
const PanelBody = styled.div<{ $pad?: number }>`
  display: flex;
  flex: 1;
  padding: 4px 0 0 ${(p) => p.$pad || 0}px;
`;
const PanelFoot = styled.button`
  display: flex;
  align-items: center;
  justify-content: center;
  gap: 6px;
  height: 16px;
`;
const BigButton = styled.button<{ $w: number }>`
  display: flex;
  flex-direction: column;
  align-items: center;
  width: ${(p) => p.$w}px;
  height: 64px;
  white-space: nowrap;
  svg { margin-bottom: 3px; }
  i { margin-top: 2px; }
`;
const SmallGrid = styled.div<{ $cols: string }>`
  display: grid;
  grid-template-columns: ${(p) => p.$cols};
  grid-auto-rows: 20px;
  place-items: center;
  align-content: start;
`;
const LayerColumn = styled.div`
  display: flex;
  flex: 1;
  flex-direction: column;
`;
const LayerBox = styled.button`
  display: flex;
  align-items: center;
  gap: 4px;
  height: 20px;
  margin-right: 2px;
  padding: 0 3px;
  border: 1px solid #343d4a;
  background: #4a5568;
  i { margin-left: auto; }
`;
const Swatch = styled.span`
  width: 12px;
  height: 12px;
  border: 1px solid #14181e;
  background: #fff;
`;

/* ---------- work area ---------- */
const Work = styled.main`
  display: flex;
  flex: 1;
  min-height: 452px;
`;
const Palette = styled.aside`
  display: flex;
  flex-direction: column;
  width: 67px;
  border-right: 2px solid #47515f;
  border-bottom: 3px solid #3a4353;
  overflow: hidden;
`;
const PaletteHead = styled.div`
  display: flex;
  align-items: center;
  gap: 8px;
  height: 25px;
  padding: 0 0 3px 4px;
  background: #2f3743;
  border-bottom: 2px solid #3a4353;
  color: #c6cbd2;
`;
const PaletteBody = styled.div`
  flex: 1;
  padding-top: 1px;
  background: #f0f0f0;
`;
const PaletteList = styled.ul`
  display: flex;
  flex-direction: column;
  height: 342px;
  margin: 0;
  padding: 0;
  list-style: none;
`;
const PaletteItem = styled.li`
  display: flex;
  flex: 1;
  align-items: center;
`;
const PaletteLink = styled.button`
  display: grid;
  grid-template-columns: 16px 40px;
  column-gap: 8px;
  align-items: center;
  justify-items: center;
  color: #151515;
  white-space: pre;
`;
const Arrow = styled.i`
  border: solid transparent;
  border-width: 4px 0 4px 5px;
  border-left-color: #2d5f9e;
`;
const Grip = styled.span<{ $light?: boolean }>`
  flex: none;
  width: 4px;
  height: ${(p) => (p.$light ? 14 : 11)}px;
  background: repeating-linear-gradient(#0000 0 1px, #3d4655 1px 2px),
    repeating-linear-gradient(90deg, #b4bac3 0 1px, #0000 1px 2px);
`;
const Canvas = styled.div`
  position: relative;
  flex: 1;
  background: #000;
  overflow: hidden;
`;
const ViewLabel = styled.div`
  position: absolute;
  left: 3px;
  top: 4px;
  font-size: 11px;
  line-height: 16px;
  color: #d4d4d4;
`;
const Floating = styled.div<{ $x: number; $y: number; $w: number }>`
  position: absolute;
  left: ${(p) => p.$x}px;
  top: ${(p) => p.$y}px;
  display: flex;
  align-items: center;
  width: ${(p) => p.$w}px;
  height: 20px;
  background: #3d4655;
`;
const GripCell = styled.span`
  width: 7px;
  padding-left: 2px;
  display: flex;
`;
const ToolButton = styled.button`
  display: flex;
  flex: 1;
  justify-content: center;
  min-width: 0;
`;
const ToolGap = styled.span`
  width: 1px;
  height: 16px;
  margin: 0 2px 0 1px;
  background: #6b7480;
`;
const CloseTool = styled.button`
  align-self: flex-start;
  display: flex;
  width: 8px;
  padding-top: 2px;
`;
const DocButtons = styled.div`
  position: absolute;
  right: 5px;
  top: 7px;
  display: flex;
  button { width: 17px; height: 12px; }
`;
const Compass = styled.svg`
  position: absolute;
  right: 9px;
  top: 28px;
`;
const UcsSelect = styled.select`
  position: absolute;
  right: 29px;
  top: 130px;
  width: 50px;
  height: 14px;
  padding: 0 6px;
  border: 1px solid #6d6d74;
  border-radius: 4px;
  appearance: none;
  background: #96969c;
  color: #62626a;
  font-size: 9px;
  line-height: 12px;
`;
const NavBar = styled.div`
  position: absolute;
  right: 3px;
  top: 166px;
  display: flex;
  flex-direction: column;
  align-items: center;
  justify-content: space-between;
  width: 28px;
  height: 183px;
  padding: 16px 0;
  border-radius: 4px;
  background: #414141;
`;
const Cursor = styled.svg`
  position: absolute;
  left: 310px;
  top: 250px;
`;
const Ucs = styled.svg`
  position: absolute;
  left: 130px;
  top: 294px;
`;
const CommandBar = styled.form`
  position: absolute;
  left: 20%;
  right: 20%;
  bottom: 1px;
  display: flex;
  align-items: center;
  height: 21px;
  background: #2b323d;
`;
const CommandTools = styled.div`
  display: flex;
  align-items: center;
  width: 49px;
  padding-left: 4px;
`;
const CommandField = styled.div`
  display: flex;
  flex: 1;
  align-items: center;
  gap: 2px;
  height: 21px;
  padding: 0 3px;
  background: #b2b2b2;
`;
const CommandInput = styled.input`
  flex: 1;
  min-width: 0;
  padding-left: 3px;
  font-size: 11px;
  font-style: italic;
  &::placeholder { color: #5e5e5e; opacity: 1; }
`;

/* ---------- bottom ---------- */
const LayoutRow = styled.div`
  display: flex;
  align-items: flex-start;
  height: 25px;
  padding: 1px 1px 0 9px;
`;
const LayoutTab = styled.button<{ $active?: boolean; $w: number }>`
  width: ${(p) => p.$w}px;
  height: 14px;
  clip-path: polygon(0 0, 100% 0, calc(100% - 5px) 100%, 5px 100%);
  background: ${(p) => (p.$active ? "#3d4757" : "#2c3541")};
  color: ${(p) => (p.$active ? "#fff" : "#c3c8cf")};
  font-weight: ${(p) => (p.$active ? 700 : 400)};
`;
const Readout = styled.button<{ $w: number }>`
  display: flex;
  align-items: center;
  justify-content: ${(p) => (p.$w > 100 ? "flex-end" : "center")};
  gap: 4px;
  width: ${(p) => p.$w}px;
  height: 21px;
  padding: 0 ${(p) => (p.$w > 100 ? 4 : 0)}px;
  border-right: 1px solid #222a34;
  background: #333c49;
  font-size: ${(p) => (p.$w > 100 ? 11 : 10)}px;
  white-space: nowrap;
`;
const Spacer = styled.span`
  flex: 1;
`;
const StatusBar = styled.footer`
  display: flex;
  align-items: center;
  justify-content: flex-end;
  gap: 2px;
  height: 23px;
  padding-right: 1px;
`;
const StatusGroup = styled.div`
  display: flex;
  gap: 1px;
  padding-right: 1px;
  &:last-child { padding-right: 0; }
`;
const StatusCell = styled.button<{ $w?: number; $on?: boolean; $text?: boolean }>`
  display: flex;
  align-items: center;
  justify-content: center;
  gap: 4px;
  width: ${(p) => p.$w || 20}px;
  height: 20px;
  background: ${(p) => (p.$on ? "#5d93c8" : "#3a4352")};
  white-space: nowrap;
  ${(p) => p.$text && css`font-size: 11px;`}
`;
const UnitCell = styled(StatusCell)`
  gap: 9px;
  padding: 0 3px;
`;

const Watermark = styled.div`
  position: absolute;
  left: 536px;
  top: 317px;
  width: 0;
  height: 0;
  display: flex;
  align-items: center;
  justify-content: center;
  transform: rotate(-44deg);
  font-size: 53px;
  line-height: 60px;
  white-space: nowrap;
  color: #dd0f19;
  text-shadow: -4px 0 #6c6c6a, 2px 0 #6c6c6a, 0 -3px #6c6c6a, 0 4px #6c6c6a,
    -3px -2px #6c6c6a, 2px -2px #6c6c6a, -3px 3px #6c6c6a, 2px 3px #6c6c6a,
    -5px 1px #6c6c6a, -1px 5px #6c6c6a;
  opacity: 0.68;
  pointer-events: none;
`;

/* ---------- content ---------- */
const menuTabs = ["默认", "插入", "注释", "参数化", "视图", "管理", "输出", "附加模块", "协作", "精选应用", "天正建筑"];
const paletteItems = ["设　　置", "轴网柱子", "墙　　体", "门　　窗", "房间屋顶", "楼梯其他", "立　　面", "剖　　面", "文字表格", "尺寸标注", "符号标注", "图层控制", "工　　具", "图块图案", "建筑防火", "场地布置", "三维建模", "文件布图", "其　　它", "数据中心", "帮助演示", "在线购买"];

const floatingBars = [
  { x: 118, y: 17, w: 491, tools: "redGrid axes axis1 axisKey | ibeam wallBar corner arrowIn door column | hatchPen cross1 cross2 | grid3 dim2 dim3 radius angle dimGreen | diag moveRed moveBlue paste" },
  { x: 104, y: 56, w: 317, tools: "sheets sheetDark | bulbB bulbBP bulbW bulbS flake flakeP sun lockB lockBP lockYe sheetCur sheetBlue sheetPen" },
  { x: 71, y: 95, w: 496, tools: "handDoc preview | winBlue winGreen | lev1 lev2 beam path8 rulerLeg triMark insBlue elev ab | gridLt wave dome house | eyeRed editDoc eye | gridBlue film waveY" },
  { x: 79, y: 149, w: 510, tools: "colGrey sketch sheets redGrid axes axisL column wallBar pipe door m2 m2p winBlue gate gateF envY stampR penBlue book layout elev rulerLeg triMark target helpB" },
  { x: 121, y: 204, w: 288, tools: "ord1 ord2 ord3 ord4 | alL alR alC | alT alB alM | listW cols slashes" },
];

/* "*" marks a switched-on toggle, "v" a drop-down arrow */
const statusGroups = [
  "gridS dots v",
  "infer *dyn ortho *polar v iso v *track *osnap v",
  "lw *transp cycle cube v",
  "*ucsA filter v *gizmo v",
];

const StatusItems = ({ items }: { items: string }) => (
  <>
    {items.split(" ").map((n, i) =>
      n === "v" ? (
        <StatusCell key={i} $w={12} aria-label="更多"><Caret $size={3} /></StatusCell>
      ) : (
        <StatusCell key={i} $on={n[0] === "*"} aria-label={n.replace("*", "")}>
          <Icon name={n.replace("*", "")} size={15} />
        </StatusCell>
      )
    )}
  </>
);

const GridIcons = ({ names }: { names: string }) => (
  <>
    {names.split(" ").map((n, i) =>
      n === "v" ? <Caret key={i} /> : n === "-" ? <span key={i} /> : (
        <IconButton key={i} $w={18} aria-label={n}><Icon name={n} size={15} /></IconButton>
      )
    )}
  </>
);

const Foot = ({ children }: { children?: React.ReactNode }) => (
  <PanelFoot>{children}<Caret $size={4} /></PanelFoot>
);

const LineArt = () => (
  <svg width="30" height="30" viewBox="0 0 30 30"><path d="M2 28L28 3" stroke={ink} /><path d="M0 26h4v4H0zM26 1h4v4h-4z" fill={blue} /></svg>
);
const PolyArt = () => (
  <svg width="30" height="30" viewBox="0 0 30 30"><path d="M2 22h18c10-1 10-12 0-13" stroke={ink} fill="none" /><path d="M0 20h4v4H0zM17 20h4v4h-4zM17 7h4v4h-4z" fill={blue} /></svg>
);
const CircleArt = () => (
  <svg width="30" height="30" viewBox="0 0 30 30"><circle cx="14" cy="16" r="13" stroke={ink} fill="none" /><path d="M14 16l6-6" stroke={blue} /><path d="M12 14h4v4h-4zM18 8h4v4h-4z" fill={blue} /></svg>
);
const ArcArt = () => (
  <svg width="30" height="30" viewBox="0 0 30 30"><path d="M4 26C6 14 14 6 27 4" stroke={ink} fill="none" /><path d="M2 25h4v4H2zM9 9h4v4H9zM25 2h4v4h-4z" fill={blue} /></svg>
);
const TextArt = () => (
  <svg width="30" height="30" viewBox="0 0 30 30"><path d="M5 28L15 5l10 23M9 20h12" stroke={ink} strokeWidth="3.500" fill="none" /></svg>
);
const DimArt = () => (
  <svg width="30" height="30" viewBox="0 0 30 30"><path d="M1.500 2v26M28.500 2v26M2 7.500h26" stroke={ink} /><path d="M2 7.500l5-2v4zM28 7.500l-5-2v4z" fill={ink} /><path d="M15 16v6M8 18l4 4M22 18l-4 4M5 26h5M20 26h5" stroke={amber} strokeWidth="2" /></svg>
);
const LayersArt = () => (
  <svg width="30" height="30" viewBox="0 0 30 30"><path d="M8 1h17l-8 8H1z M4 11h14l7-6-8 9H1z M4 16h14l5-5-6 9H1z" fill={ink} /><path d="M1 20h13v3H4z" fill={ink} /><path d="M17 12h12v17H17z" fill="#eef0f2" stroke="#2b323d" /><path d="M19 14h8v6h-8z" fill={blue} /><path d="M20 23h6M20 26h6M21 22l-2 1 2 1M25 25l2 1-2 1" stroke="#2b323d" /></svg>
);
const InsertArt = () => (
  <svg width="30" height="30" viewBox="0 0 30 30"><path d="M14 1h10l5 5v15H14z" fill="#8ecaf2" /><path d="M24 1v5h5z" fill="#d4ebfa" /><rect x="2" y="10" width="18" height="12" fill="#59616c" stroke={ink} /><circle cx="20" cy="22" r="6" fill="#59616c" fillOpacity=".8" stroke={ink} /><path d="M0 20h4v4H0z" fill={ink} /></svg>
);
const WheelArt = () => {
  const colors = ["#fcc14a", "#f7913c", "#ee5b6d", "#7d4ff0", "#4a86f2", "#18b9b4", "#58c46c", "#a6cf58"];
  return (
    <svg width="30" height="30" viewBox="0 0 30 30">
      {colors.map((c, i) => {
        const a = ((i * 45 - 90) * Math.PI) / 180;
        const b = ((i * 45 - 44) * Math.PI) / 180;
        return <path key={c} fill={c} d={`M15 15L${15 + 14 * Math.cos(a)} ${15 + 14 * Math.sin(a)}A14 14 0 0 1 ${15 + 14 * Math.cos(b)} ${15 + 14 * Math.sin(b)}z`} />;
      })}
    </svg>
  );
};
const GroupArt = () => (
  <svg width="30" height="30" viewBox="0 0 30 30"><path d="M6 1H2v24h4M17 1h4v24h-4" stroke={ink} fill="none" /><path d="M7 4h9v7H7z" stroke="#58c46c" fill="none" /><circle cx="12" cy="18" r="4" stroke="#58c46c" fill="none" /><path d="M19 15l9 9h-4l2 4-2 1-2-4-3 3z" fill="#f5dfe0" /></svg>
);
const CalcArt = () => (
  <svg width="30" height="30" viewBox="0 0 30 30"><path d="M5 1h20v28H5z" fill="#dcdcdc" /><path d="M8 5h14v5H8z" fill="#4c4c4c" />{[13, 18, 23].map((y) => [8, 13, 18].map((x) => <path key={`${x}-${y}`} d={`M${x} ${y}h4v3h-4z`} fill="#4c4c4c" />))}</svg>
);
const PasteArt = () => (
  <svg width="30" height="30" viewBox="0 0 30 30"><path d="M4 4h20v23H4z" fill="#d8a765" /><path d="M9 5V2h3c0-2 4-2 4 0h3v3z" fill="#f0f0f0" /><path d="M11 9h10l6 6v14H11z" fill="#e1e3e5" stroke="#4a566a" /><path d="M21 9v6h6z" fill="#fff" stroke="#4a566a" /></svg>
);
const BaseArt = () => (
  <svg width="30" height="30" viewBox="0 0 30 30"><path d="M1 6h13v9h15v11H1z" fill="#d9dadc" /></svg>
);
const TouchArt = () => (
  <svg width="30" height="30" viewBox="0 0 30 30"><circle cx="14" cy="8" r="6" fill="none" stroke="#222a34" /><path d="M12 8c0-3 4-3 4 0v7l8 2c2 1 1 8-1 12h-9l-7-9c0-2 3-2 5 1z" fill="#eef0f2" /></svg>
);

export default function App() {
  return (
    <Shell>
      <GlobalStyle />
      <Header>
        <AppButton aria-label="应用程序菜单">
          <svg width="26" height="26" viewBox="0 0 26 26">
            <path d="M3 22L10 1h6l7 18-5 2-2-5-7 1-1 5z" fill="#c81f24" />
            <path d="M10 1h6l-6 16-7 5zM10 13l6-1" fill="#e5484a" stroke="#8e1519" strokeWidth=".5" />
            <path d="M11 13l2-7 3 7z" fill="#8d8f92" />
          </svg>
          <Caret $size={3} $color="#2b2f36" />
        </AppButton>
        <HeaderMain>
          <TitleBar>
            <TitleHalf>
              <ToolStrip>
                {["new", "open", "save", "saveAs", "openWeb", "saveWeb", "print", "undo"].map((n) => (
                  <IconButton key={n} aria-label={n}><Icon name={n} size={15} /></IconButton>
                ))}
                <IconButton $w={8} aria-label="撤销列表"><Caret /></IconButton>
                <IconButton aria-label="redo"><Icon name="redo" size={15} /></IconButton>
                <IconButton $w={10} aria-label="重做列表"><Caret $color="#7b828c" /></IconButton>
                <IconButton $w={14} aria-label="custom"><Icon name="custom" size={12} /></IconButton>
              </ToolStrip>
            </TitleHalf>
            <DocTitle>Drawing1.dwg</DocTitle>
            <TitleHalf $end>
              <TitleTools>
                <svg width="4" height="7" viewBox="0 0 4 7"><path d="M0 0l4 3.500L0 7z" fill={ink} /></svg>
                <SearchBox aria-label="搜索" placeholder="键入关键字或短语" />
                <IconButton $w={20} aria-label="binoc"><Icon name="binoc" size={13} /></IconButton>
                <SignIn><IconButton as="span" $w={22}><Icon name="user" size={13} /></IconButton>登录</SignIn>
                <IconButton $w={18} aria-label="登录菜单"><Caret /></IconButton>
                <IconButton $w={20} aria-label="cart"><Icon name="cart" size={14} /></IconButton>
                <IconButton $w={20} aria-label="share"><Icon name="share" size={14} /></IconButton>
                <IconButton $w={8} aria-label="共享菜单"><Caret /></IconButton>
                <Divider />
                <IconButton $w={20} aria-label="help"><Icon name="help" size={13} /></IconButton>
                <IconButton $w={10} aria-label="帮助菜单"><Caret /></IconButton>
                <WindowButtons>
                  <IconButton $w={22} aria-label="最小化"><Icon name="min" size={12} /></IconButton>
                  <IconButton $w={20} aria-label="最大化"><Icon name="max" size={12} /></IconButton>
                  <IconButton $w={22} aria-label="关闭"><Icon name="close" size={12} /></IconButton>
                </WindowButtons>
              </TitleTools>
            </TitleHalf>
          </TitleBar>
          <Tabs>
            {menuTabs.map((t, i) => <Tab key={t} $active={i === 0}>{t}</Tab>)}
            <TabExtra aria-label="功能区显示"><Pill><Caret $up $size={2} $color="#222a34" /></Pill><Caret /></TabExtra>
          </Tabs>
        </HeaderMain>
      </Header>

      <Ribbon>
        <Panel $w={181}>
          <PanelBody $pad={2}>
            <BigButton $w={35}><LineArt />直线</BigButton>
            <BigButton $w={35}><PolyArt />多段线</BigButton>
            <BigButton $w={35}><CircleArt />圆<Caret /></BigButton>
            <BigButton $w={35}><ArcArt />圆弧<Caret /></BigButton>
            <SmallGrid $cols="26px 6px"><GridIcons names="rect v ellipse v hatch v" /></SmallGrid>
          </PanelBody>
          <Foot>绘图</Foot>
        </Panel>
        <Panel $w={114}>
          <PanelBody>
            <SmallGrid $cols="25px 25px 25px 6px 35px"><GridIcons names="move rotate trim v erase copy mirror fillet v box3 stretch scale array v offset" /></SmallGrid>
          </PanelBody>
          <Foot>修改</Foot>
        </Panel>
        <Panel $w={107}>
          <PanelBody $pad={3}>
            <BigButton $w={36}><TextArt />文字<Caret /></BigButton>
            <BigButton $w={36}><DimArt />标注</BigButton>
            <SmallGrid $cols="20px 10px"><GridIcons names="dimlin v leader v table -" /></SmallGrid>
          </PanelBody>
          <Foot>注释</Foot>
        </Panel>
        <Panel $w={216}>
          <PanelBody>
            <BigButton $w={36}><LayersArt />图层<span>特性</span></BigButton>
            <LayerColumn>
              <LayerBox aria-label="图层">
                <Icon name="bulbY" size={13} /><Icon name="sunY" size={13} /><Icon name="lockY" size={13} /><Swatch />0<Caret $size={4} />
              </LayerBox>
              <SmallGrid $cols="repeat(5, 21px)"><GridIcons names="l1 l2 l3 l4 l5 l6 l7 l8 l9 l10" /></SmallGrid>
            </LayerColumn>
          </PanelBody>
          <Foot>图层</Foot>
        </Panel>
        <Panel $w={69}>
          <PanelBody>
            <BigButton $w={36}><InsertArt />插入<Caret /></BigButton>
            <SmallGrid $cols="20px 10px"><GridIcons names="b1 - b2 - b3 v" /></SmallGrid>
          </PanelBody>
          <Foot>块</Foot>
        </Panel>
        <Panel $w={50} $tall><PanelBody><BigButton $w={50}><WheelArt />特性</BigButton></PanelBody><Foot /></Panel>
        <Panel $w={50} $tall><PanelBody><BigButton $w={50}><GroupArt />组</BigButton></PanelBody><Foot /></Panel>
        <Panel $w={51} $tall><PanelBody><BigButton $w={51}><CalcArt />实用工具</BigButton></PanelBody><Foot /></Panel>
        <Panel $w={50} $tall><PanelBody><BigButton $w={50}><PasteArt />剪贴板</BigButton></PanelBody><Foot /></Panel>
        <Panel $w={52}>
          <PanelBody><BigButton $w={52}><BaseArt />基点<Caret /></BigButton></PanelBody>
          <PanelFoot>视图<Caret $size={4} /><svg width="5" height="5" viewBox="0 0 5 5"><path d="M0 0l4 4M4.500 1v3.500H1" stroke={ink} fill="none" /></svg></PanelFoot>
        </Panel>
        <Panel $w={36}>
          <PanelBody><BigButton $w={36}><TouchArt />选择<span>模式</span></BigButton></PanelBody>
          <PanelFoot>触摸</PanelFoot>
        </Panel>
      </Ribbon>

      <Work>
        <Palette>
          <PaletteHead><Grip />T...</PaletteHead>
          <PaletteBody>
            <PaletteList>
              {paletteItems.map((t, i) => (
                <PaletteItem key={t}>
                  <PaletteLink>{i === paletteItems.length - 1 ? <Icon name="buy" size={14} /> : <Arrow />}{t}</PaletteLink>
                </PaletteItem>
              ))}
            </PaletteList>
          </PaletteBody>
        </Palette>
        <Canvas>
          <ViewLabel>[−][俯视][二维线框]</ViewLabel>
          {floatingBars.map((bar) => (
            <Floating key={bar.y} $x={bar.x} $y={bar.y} $w={bar.w} role="toolbar">
              <GripCell><Grip /></GripCell>
              {bar.tools.split(" ").map((n, i) => n === "|" ? <ToolGap key={i} /> : (
                <ToolButton key={i} aria-label={n}><Icon name={n} size={15} /></ToolButton>
              ))}
              <CloseTool aria-label="关闭"><Icon name="closeBold" size={6} /></CloseTool>
            </Floating>
          ))}
          <DocButtons>
            <IconButton aria-label="最小化"><Icon name="min" size={12} /></IconButton>
            <IconButton aria-label="还原"><Icon name="restore" size={11} /></IconButton>
            <IconButton aria-label="关闭"><Icon name="closeBold" size={9} /></IconButton>
          </DocButtons>
          <Compass width="88" height="90" viewBox="0 0 88 90">
            <circle cx="44" cy="45" r="34" fill="none" stroke="#303030" strokeWidth="8" />
            <rect x="28" y="29" width="32" height="32" fill="#b4b6b8" stroke="#8f9294" />
            <rect x="34" y="35" width="20" height="20" fill="#a2a8b0" />
            <g fontSize="12" fill="#a9a9a9" textAnchor="middle">
              <text x="44" y="15">北</text><text x="8" y="50">西</text><text x="80" y="50">东</text><text x="44" y="86">南</text>
              <text x="44" y="52" fontSize="20" fill="#36404c">上</text>
            </g>
          </Compass>
          <UcsSelect aria-label="坐标系" defaultValue="未命名"><option>未命名</option></UcsSelect>
          <NavBar>
            <Icon name="wheel" size={20} /><Caret $color="#1c1c1c" />
            <Icon name="hand" size={20} />
            <Icon name="zoomX" size={20} /><Caret $color="#1c1c1c" />
            <Icon name="orbit" size={20} /><Caret $color="#1c1c1c" />
            <Icon name="movie" size={20} />
          </NavBar>
          <Ucs width="70" height="66" viewBox="0 0 70 66">
            <path d="M7.500 17v43.500h43M3.500 56.500h8v8h-8zM8.500 3l5 5 5-5M13.500 8v6M54 49l11 10M65 49L54 59" fill="none" stroke="#cfcfcf" />
          </Ucs>
          <Cursor width="86" height="86" viewBox="0 0 86 86">
            <path d="M0 42.500h40M45 42.500h39M42.500 1v39M42.500 45v39M40.500 40.500h4v4h-4z" fill="none" stroke="#d6d6d6" />
          </Cursor>
          <CommandBar>
            <CommandTools><Grip $light /><IconButton type="button" $w={18} aria-label="关闭"><Icon name="close" size={9} /></IconButton><IconButton type="button" $w={22} aria-label="自定义"><Icon name="wrench" size={13} /></IconButton></CommandTools>
            <CommandField>
              <Icon name="prompt" size={15} /><Caret $size={3} $color="#343434" />
              <CommandInput aria-label="命令" placeholder="键入命令" />
              <Caret $up $size={3} $color="#343434" />
            </CommandField>
          </CommandBar>
        </Canvas>
      </Work>

      <LayoutRow>
        <LayoutTab $active $w={41}>模型</LayoutTab>
        <LayoutTab $w={46}>布局1</LayoutTab>
        <LayoutTab $w={46}>布局2</LayoutTab>
        <LayoutTab $w={26}>+</LayoutTab>
        <Spacer />
        <Readout $w={64}>比例 1:100<Caret $size={3} /></Readout>
        <Readout $w={121}>27497, 7965, 0</Readout>
      </LayoutRow>
      <StatusBar>
        <StatusCell $w={24}>模型</StatusCell>
        {statusGroups.map((g) => <StatusGroup key={g}><StatusItems items={g} /></StatusGroup>)}
        <StatusGroup><StatusItems items="*ann1 ann2 ann3" /><StatusCell $w={67} $text>1:1 / 100%<Caret $size={3} /></StatusCell></StatusGroup>
        <StatusGroup><StatusItems items="gear v plus" /></StatusGroup>
        <StatusGroup><UnitCell $w={83}><Icon name="ruler" size={14} />小数<Spacer /><Caret $size={3} /></UnitCell></StatusGroup>
        <StatusGroup><StatusItems items="qp lockUi v shapes isoBlue ham1 ham2 ham3 ham4" /></StatusGroup>
        <StatusGroup><StatusItems items="*perf" /></StatusGroup>
        <StatusGroup><StatusItems items="full menu" /></StatusGroup>
      </StatusBar>
      <Watermark>关注微信公众号：安盾软件管家</Watermark>
    </Shell>
  );
}
